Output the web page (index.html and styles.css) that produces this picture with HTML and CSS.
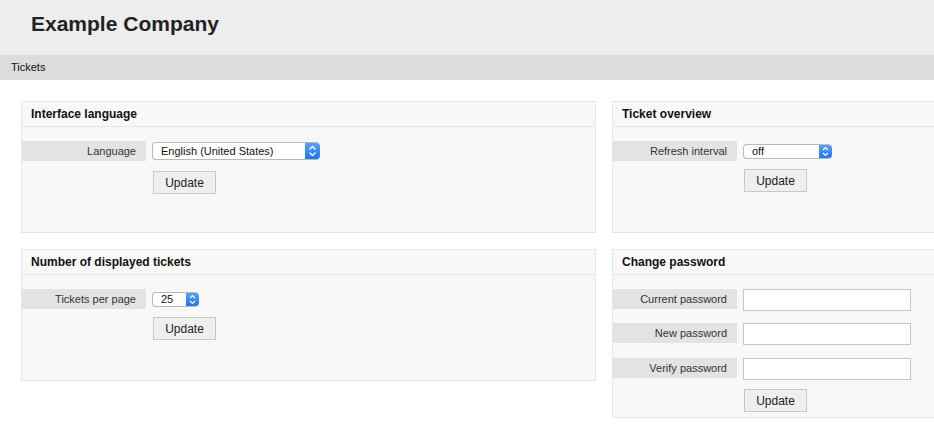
FILE: index.html
```html
<!DOCTYPE html>
<html lang="en">
<head>
<meta charset="utf-8">
<title>Preferences</title>
<link rel="stylesheet" href="styles.css">
</head>
<body>
<header class="site-header">
  <h1 class="site-title">Example Company</h1>
</header>
<nav class="site-nav"><span class="nav-item">Tickets</span></nav>
<main class="prefs">
  <section class="panel">
    <h2 class="panel-head">Interface language</h2>
    <div class="panel-body">
      <div class="row">
        <label class="row-label">Language</label>
        <div class="select select-lg select-lang">
          <span class="select-text">English (United States)</span>
          <span class="stepper"><svg viewBox="0 0 15 18" width="15" height="18"><polyline points="4.5,7.5 7.5,4.5 10.5,7.5" fill="none" stroke="#fff" stroke-width="1.3"/><polyline points="4.5,10.5 7.5,13.5 10.5,10.5" fill="none" stroke="#fff" stroke-width="1.3"/></svg></span>
        </div>
      </div>
      <button class="btn">Update</button>
    </div>
  </section>
  <section class="panel">
    <h2 class="panel-head">Ticket overview</h2>
    <div class="panel-body">
      <div class="row">
        <label class="row-label">Refresh interval</label>
        <div class="select select-refresh">
          <span class="select-text">off</span>
          <span class="stepper"><svg viewBox="0 0 13 15" width="13" height="15"><polyline points="4,6 6.5,3.5 9,6" fill="none" stroke="#fff" stroke-width="1.2"/><polyline points="4,9 6.5,11.5 9,9" fill="none" stroke="#fff" stroke-width="1.2"/></svg></span>
        </div>
      </div>
      <button class="btn">Update</button>
    </div>
  </section>
  <section class="panel">
    <h2 class="panel-head">Number of displayed tickets</h2>
    <div class="panel-body">
      <div class="row">
        <label class="row-label">Tickets per page</label>
        <div class="select select-count">
          <span class="select-text">25</span>
          <span class="stepper"><svg viewBox="0 0 13 15" width="13" height="15"><polyline points="4,6 6.5,3.5 9,6" fill="none" stroke="#fff" stroke-width="1.2"/><polyline points="4,9 6.5,11.5 9,9" fill="none" stroke="#fff" stroke-width="1.2"/></svg></span>
        </div>
      </div>
      <button class="btn">Update</button>
    </div>
  </section>
  <section class="panel">
    <h2 class="panel-head">Change password</h2>
    <div class="panel-body pw-body">
      <div class="row pw-row">
        <label class="row-label">Current password</label>
        <input class="text-input" type="password">
      </div>
      <div class="row pw-row">
        <label class="row-label">New password</label>
        <input class="text-input" type="password">
      </div>
      <div class="row pw-row pw-row-last">
        <label class="row-label">Verify password</label>
        <input class="text-input" type="password">
      </div>
      <button class="btn btn-pw">Update</button>
    </div>
  </section>
</main>
</body>
</html>
```

FILE: styles.css
```css
html, body {
  margin: 0;
  padding: 0;
  overflow: hidden;
  background: #fff;
}
body {
  font-family: "Liberation Sans", Arial, Helvetica, sans-serif;
  color: #222;
  width: 980px;
}
.site-header {
  height: 55px;
  background: #ededed;
  padding-left: 31px;
  box-sizing: border-box;
  padding-top: 12px;
}
.site-title {
  margin: 0;
  font-size: 21px;
  line-height: 24px;
  font-weight: bold;
  color: #222;
}
.site-nav {
  height: 25px;
  background: #dcdcdc;
  padding-left: 11px;
  font-size: 11px;
  line-height: 25px;
  color: #111;
}
.prefs {
  display: grid;
  grid-template-columns: 575px 340px;
  column-gap: 16px;
  row-gap: 16px;
  align-items: start;
  padding: 21px 0 0 21px;
}
.panel {
  border: 1px solid #e6e6e6;
  background: #f8f8f8;
  min-height: 130px;
}
.panel-head {
  margin: 0;
  height: 24px;
  line-height: 24px;
  padding-left: 9px;
  font-size: 12px;
  font-weight: bold;
  color: #111;
  border-bottom: 1px solid #e6e6e6;
}
.panel-body {
  padding: 14px 0 10px 0;
  display: flex;
  flex-direction: column;
  align-items: flex-start;
}
.row {
  display: flex;
  align-items: flex-start;
  column-gap: 6px;
}
.row-label {
  width: 124px;
  height: 20px;
  line-height: 20px;
  box-sizing: border-box;
  padding-right: 10px;
  text-align: right;
  background: #e3e3e3;
  font-size: 11px;
  color: #333;
}
.select {
  display: flex;
  align-items: stretch;
  box-sizing: border-box;
  height: 15px;
  margin-top: 3px;
  border: 1px solid #b9b9b9;
  border-right: none;
  border-radius: 4px;
  background: #fff;
  overflow: hidden;
  font-size: 11px;
  color: #111;
}
.select-lg {
  height: 18px;
  margin-top: 1px;
  margin-bottom: 3px;
}
.select-lang { width: 168px; }
.select-refresh { width: 89px; }
.select-count { width: 47px; }
.select-text {
  flex: 1;
  padding-left: 8px;
  line-height: 13px;
  white-space: nowrap;
}
.select-lg .select-text { line-height: 16px; }
.stepper {
  display: flex;
  align-items: center;
  justify-content: center;
  margin: -1px 0;
  background: linear-gradient(#5aa2fb, #1b72f0);
  border-radius: 0 4px 4px 0;
}
.stepper svg { display: block; }
.btn {
  margin: 8px 0 0 131px;
  width: 63px;
  height: 23px;
  box-sizing: border-box;
  border: 1px solid #c8c8c8;
  background: #efefef;
  font-family: "Liberation Sans", Arial, Helvetica, sans-serif;
  font-size: 12px;
  color: #222;
  padding: 0;
}
.pw-body {
  padding-bottom: 5px;
  row-gap: 12px;
}
.pw-row { height: 22px; }
.pw-row-last { margin-top: 1px; }
.text-input {
  width: 168px;
  height: 22px;
  box-sizing: border-box;
  border: 1px solid #c6c6c6;
  background: #fff;
  margin: 0;
  padding: 0 4px;
}
.btn-pw { margin-top: -3px; }
```
